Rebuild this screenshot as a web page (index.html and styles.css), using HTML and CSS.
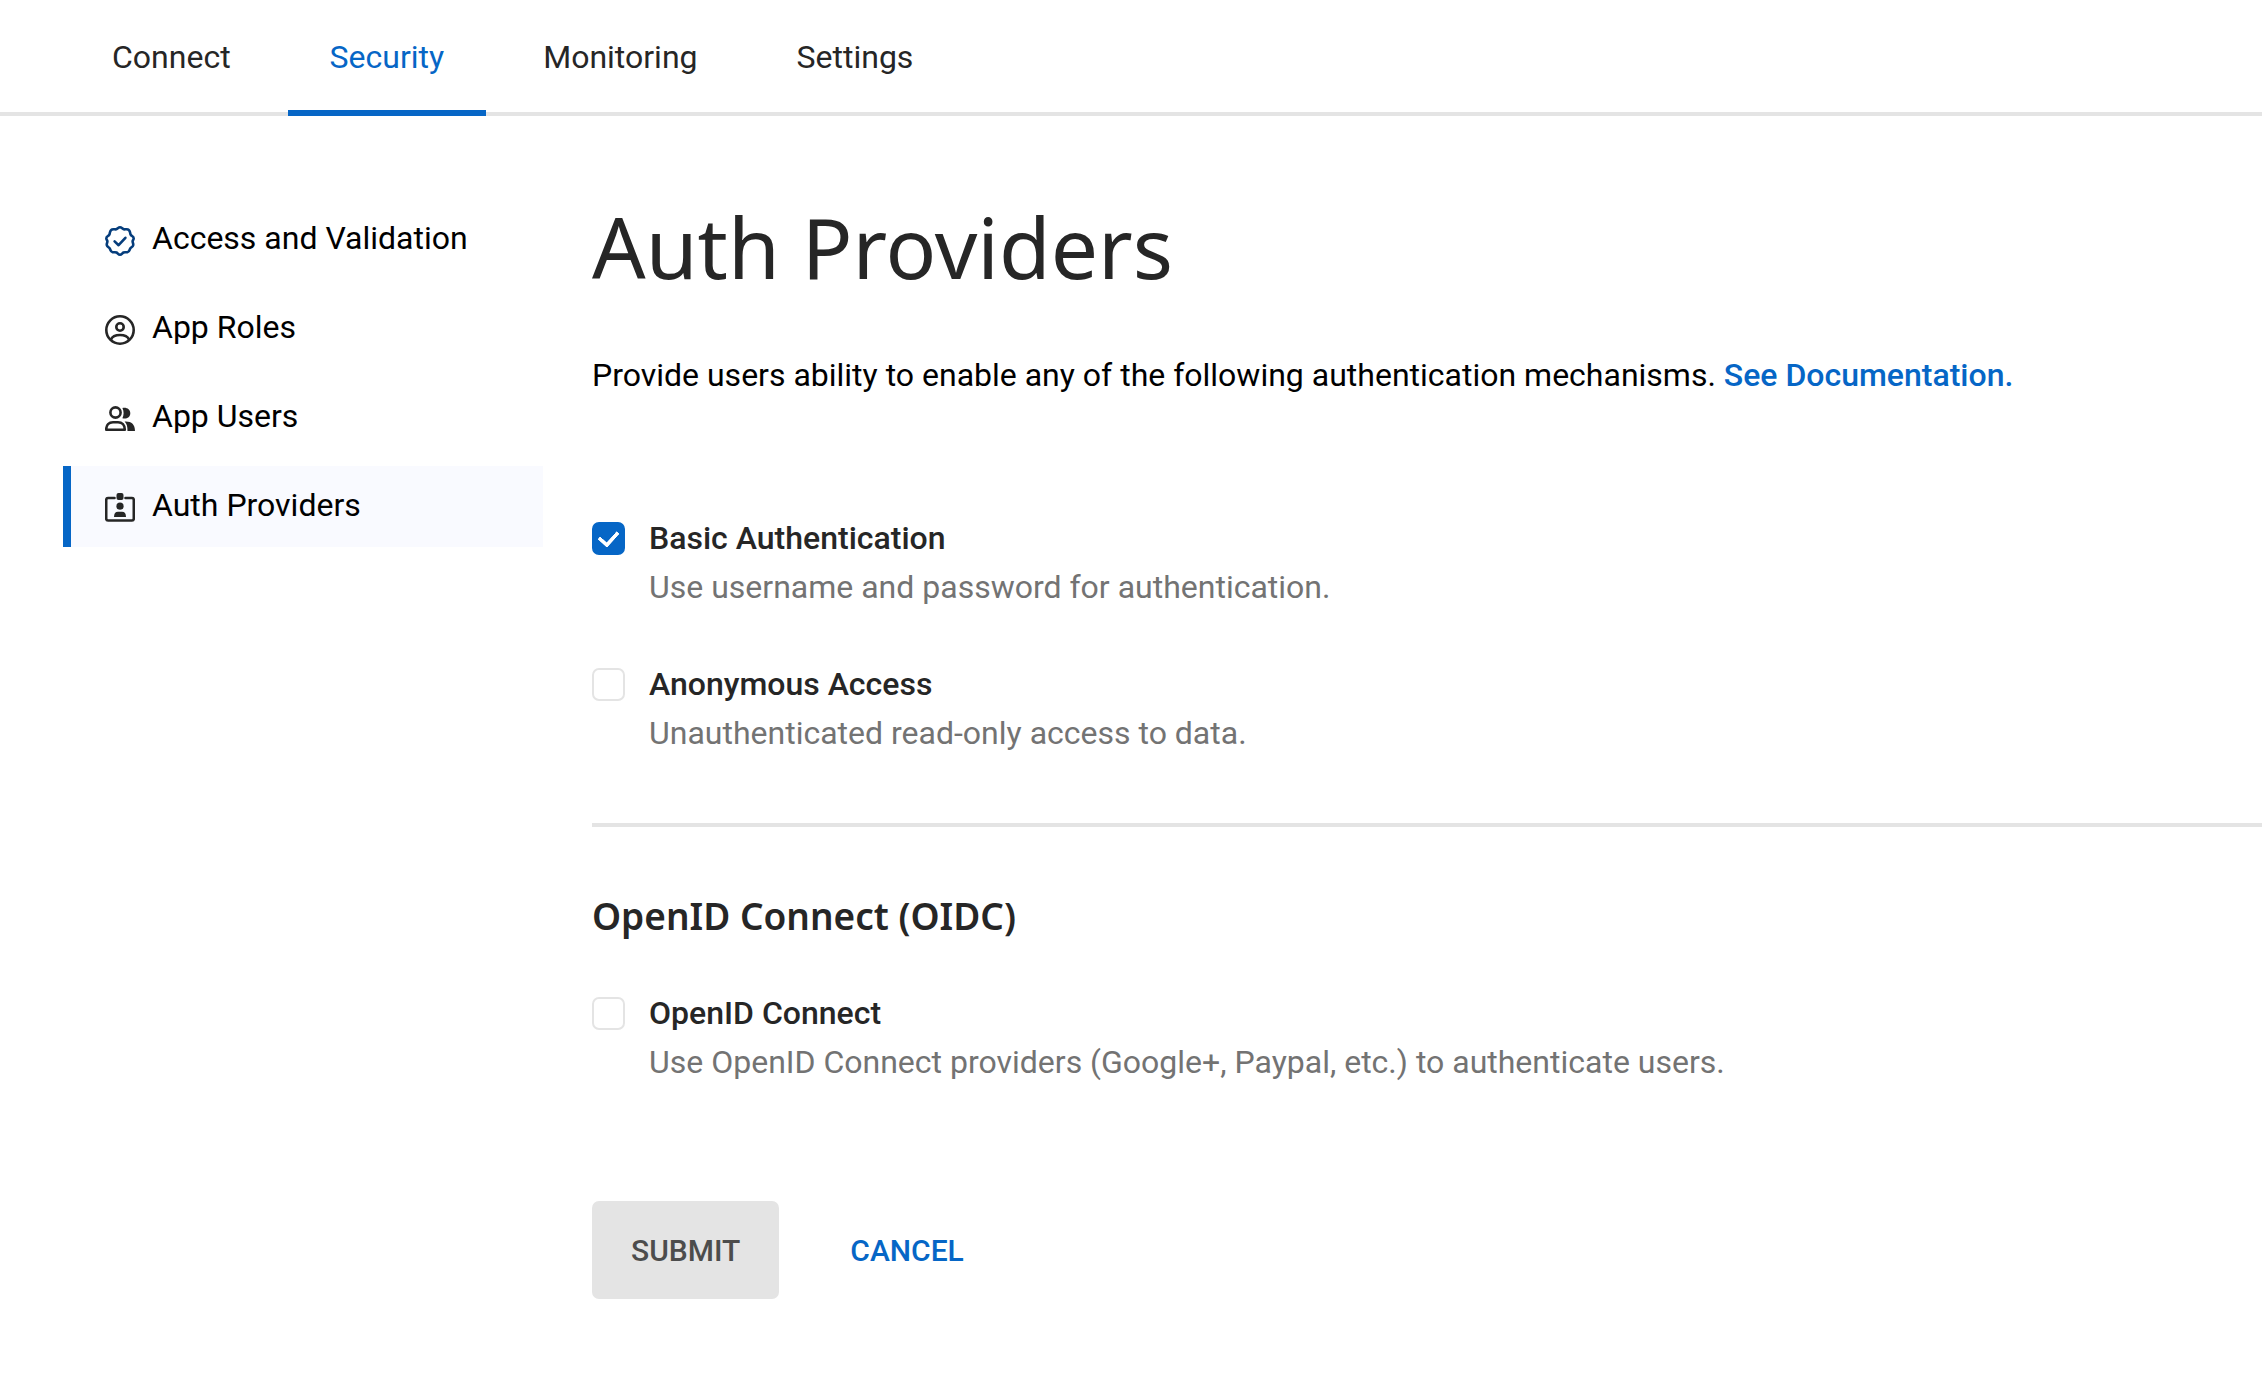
FILE: index.html
```html
<!DOCTYPE html>
<html lang="en">
<head>
  <meta charset="utf-8">
  <meta name="viewport" content="width=device-width, initial-scale=1">
  <title>Auth Providers</title>
  <link rel="stylesheet" href="styles.css">
</head>
<body>
  <nav class="tabs" aria-label="Sections">
    <a class="tab" href="#connect">Connect</a>
    <a class="tab tab-active" href="#security" aria-current="page">Security</a>
    <a class="tab" href="#monitoring">Monitoring</a>
    <a class="tab" href="#settings">Settings</a>
  </nav>
  <div class="layout">
    <nav class="sidebar" aria-label="Security">
      <a class="side-link" href="#access">
        <svg class="icon icon-blue" viewBox="0 0 30 30" aria-hidden="true">
          <path d="M15 1.300C16.800 1.300 17.500 3.300 19.200 3.400C21 3.400 22.600 2.600 24 4.200C25.500 5.600 24.900 7.500 25.800 8.900C26.900 10.300 28.700 10.300 28.700 12.500C28.700 13.800 27.600 14.300 27.600 15.500C27.600 16.800 28.600 17.600 28.200 19.200C27.700 21.100 25.900 21.200 25.100 22.700C24.400 24.200 24.400 25.800 22.400 26.200C20.900 26.500 19.900 25.900 18.500 26.500C17.100 27.200 16.700 28.700 15 28.700S12.900 27.200 11.500 26.500C10.100 25.900 9.100 26.500 7.600 26.200C5.600 25.800 5.600 24.200 4.900 22.700C4.100 21.200 2.300 21.100 1.800 19.200C1.400 17.600 2.400 16.800 2.400 15.500C2.400 14.300 1.300 13.800 1.300 12.500C1.300 10.300 3.100 10.300 4.200 8.900C5.100 7.500 4.500 5.600 6 4.200C7.400 2.600 9 3.400 10.800 3.400C12.500 3.300 13.200 1.300 15 1.300Z"/>
          <path d="M9.600 15.400L13.600 19.200L20.400 11.800"/>
        </svg>
        <span>Access and Validation</span>
      </a>
      <a class="side-link" href="#roles">
        <svg class="icon" viewBox="0 0 30 30" aria-hidden="true">
          <circle cx="15" cy="15" r="13.700"/>
          <circle cx="15" cy="12" r="3.700"/>
          <path d="M6 24.500C7.500 20.800 10.500 20 15 20S22.500 20.800 24 24.500"/>
        </svg>
        <span>App Roles</span>
      </a>
      <a class="side-link" href="#users">
        <svg class="icon" viewBox="0 0 30 30" aria-hidden="true">
          <circle cx="10.500" cy="8.500" r="5.100"/>
          <path d="M1.200 25.700C1.200 21 4 18.300 8 18.300H13C17 18.300 19.800 21 19.800 25.700Z"/>
          <path class="fill" d="M17.400 4C21.500 3 25.300 5.200 25.300 9.300S21.500 15.300 17.400 14.300C19 11 19 7.300 17.400 4ZM19.600 17.500C26 17 30 20 30 26.900H22.500C22.500 22.500 22 20 19.600 17.500Z"/>
        </svg>
        <span>App Users</span>
      </a>
      <a class="side-link side-link-active" href="#providers" aria-current="page">
        <svg class="icon" viewBox="0 0 30 30" aria-hidden="true">
          <path d="M9.500 5H3Q1.200 5 1.200 7V25.500Q1.200 27.500 3 27.500H27Q28.800 27.500 28.800 25.500V7Q28.800 5 27 5H20.500"/>
          <rect class="fill" x="11.500" y="0" width="7" height="7" rx="2"/>
          <circle class="fill" cx="15" cy="13.200" r="3.600"/>
          <path class="fill" d="M9 24Q9 18.800 13 18.800H17Q21 18.800 21 24Z"/>
        </svg>
        <span>Auth Providers</span>
      </a>
    </nav>
    <main class="content">
      <h1 class="title">Auth Providers</h1>
      <p class="intro">Provide users ability to enable any of the following authentication mechanisms. <a class="doc-link" href="#docs">See Documentation.</a></p>
      <form>
        <div class="options">
          <div class="option">
            <input class="check" type="checkbox" id="basic" aria-describedby="basic-help" checked>
            <div class="option-text">
              <label class="option-name" for="basic">Basic Authentication</label>
              <p class="option-help" id="basic-help">Use username and password for authentication.</p>
            </div>
          </div>
          <div class="option">
            <input class="check" type="checkbox" id="anonymous" aria-describedby="anonymous-help">
            <div class="option-text">
              <label class="option-name" for="anonymous">Anonymous Access</label>
              <p class="option-help" id="anonymous-help">Unauthenticated read-only access to data.</p>
            </div>
          </div>
        </div>
        <section class="oidc">
          <h2 class="subtitle">OpenID Connect (OIDC)</h2>
          <div class="option">
            <input class="check" type="checkbox" id="oidc" aria-describedby="oidc-help">
            <div class="option-text">
              <label class="option-name" for="oidc">OpenID Connect</label>
              <p class="option-help" id="oidc-help">Use OpenID Connect providers (Google+, Paypal, etc.) to authenticate users.</p>
            </div>
          </div>
        </section>
        <div class="actions">
          <button class="button button-submit" type="submit">SUBMIT</button>
          <button class="button button-cancel" type="button">CANCEL</button>
        </div>
      </form>
    </main>
  </div>
</body>
</html>
```
FILE: styles.css
```css
:root {
  --blue: #0666c6;
  --ink: #262626;
  --line: #e4e4e4;
}

* {
  box-sizing: border-box;
}

body {
  margin: 0;
  background: #fff;
  color: #000;
  font-family: Roboto, "Liberation Sans", sans-serif;
  font-size: 32px;
  line-height: 48px;
}

h1, h2, p {
  margin: 0;
}

a {
  text-decoration: none;
}

.tabs {
  display: flex;
  gap: 15px;
  padding-left: 70px;
  box-shadow: inset 0 -4px var(--line);
}

.tab {
  padding: 33px 42px 29px;
  border-bottom: 6px solid transparent;
  color: var(--ink);
}

.tab-active {
  border-color: var(--blue);
  color: var(--blue);
}

.layout {
  display: grid;
  grid-template-columns: 480px minmax(0, 1fr);
  gap: 49px;
  padding: 83px 0 80px 63px;
}

.sidebar {
  display: flex;
  flex-direction: column;
  gap: 8px;
}

.side-link {
  display: flex;
  align-items: center;
  gap: 17px;
  padding: 15px 34px 18px;
  border-left: 8px solid transparent;
  color: #000;
}

.side-link-active {
  border-color: var(--blue);
  background: #f9faff;
}

.icon {
  flex: none;
  width: 30px;
  height: 30px;
  margin-top: 6px;
  fill: none;
  stroke: var(--ink);
  stroke-width: 2.600;
  stroke-linecap: round;
  stroke-linejoin: round;
}

.icon-blue {
  stroke: #053d7c;
}

.icon .fill {
  fill: var(--ink);
  stroke: none;
}

.title {
  color: var(--ink);
  font-family: "Noto Sans", sans-serif;
  font-size: 84px;
  font-weight: 400;
  line-height: 96px;
}

.intro {
  margin-top: 56px;
}

.doc-link {
  color: var(--blue);
  font-weight: 500;
}

.options {
  display: grid;
  gap: 48px;
  margin-top: 115px;
  padding-bottom: 65px;
  border-bottom: 4px solid var(--line);
}

.option {
  display: flex;
  gap: 24px;
}

.check {
  appearance: none;
  flex: none;
  display: grid;
  place-items: center;
  width: 33px;
  height: 33px;
  margin: 8px 0 0;
  border: 2px solid var(--line);
  border-radius: 7px;
  background: #fff;
}

.check:checked {
  border-color: var(--blue);
  background: var(--blue);
}

.check:checked::before {
  content: "";
  width: 9px;
  height: 15px;
  margin-bottom: 4px;
  border: solid #fff;
  border-width: 0 4px 4px 0;
  border-radius: 1px;
  transform: rotate(42deg);
}

.option-text {
  display: grid;
  line-height: 49px;
}

.option-name {
  color: var(--ink);
  font-weight: 500;
}

.option-help {
  color: #737373;
}

.subtitle {
  margin: 61px 0 45px;
  color: var(--ink);
  font-family: "Noto Sans", sans-serif;
  font-size: 37px;
  font-weight: 600;
  line-height: 56px;
}

.actions {
  display: flex;
  gap: 32px;
  margin-top: 114px;
}

.button {
  padding: 26px 39px 24px;
  border: 0;
  border-radius: 7px;
  background: none;
  font: 500 30px/48px Roboto, "Liberation Sans", sans-serif;
}

.button-submit {
  background: var(--line);
  color: #4c4c4c;
}

.button-cancel {
  color: var(--blue);
}
```
